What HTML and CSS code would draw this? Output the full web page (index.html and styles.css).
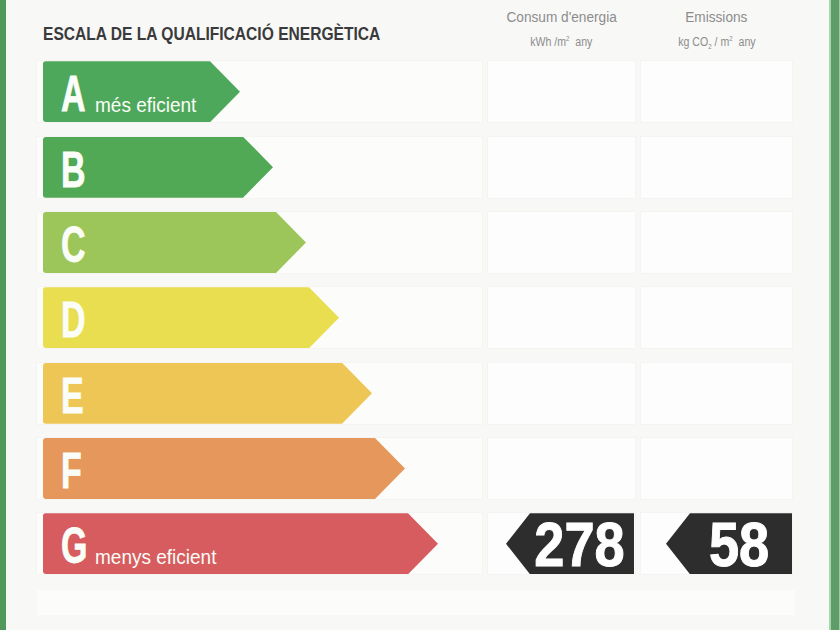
FILE: index.html
```html
<!DOCTYPE html>
<html lang="ca">
<head>
<meta charset="utf-8">
<title>Escala de la qualificació energètica</title>
<link rel="stylesheet" href="styles.css">
</head>
<body>
<div class="frame">
  <div class="edge edge-left"></div>
  <main class="sheet">
    <div class="grid">
      <div class="head head-title"><h1 class="title"><span>ESCALA DE LA QUALIFICACIÓ ENERGÈTICA</span></h1></div>
      <div class="head head-col">
        <div class="col-name"><span>Consum d'energia</span></div>
        <div class="col-unit"><span>kWh /m<sup>2</sup> &nbsp;any</span></div>
      </div>
      <div class="head head-col">
        <div class="col-name"><span>Emissions</span></div>
        <div class="col-unit"><span>kg CO<sub>2</sub> / m<sup>2</sup> &nbsp;any</span></div>
      </div>

      <div class="cell cell-bar"><div class="bar bar-a"><span class="letter">A</span><span class="note">més eficient</span></div></div>
      <div class="cell"></div><div class="cell"></div>

      <div class="cell cell-bar"><div class="bar bar-b"><span class="letter">B</span></div></div>
      <div class="cell"></div><div class="cell"></div>

      <div class="cell cell-bar"><div class="bar bar-c"><span class="letter">C</span></div></div>
      <div class="cell"></div><div class="cell"></div>

      <div class="cell cell-bar"><div class="bar bar-d"><span class="letter">D</span></div></div>
      <div class="cell"></div><div class="cell"></div>

      <div class="cell cell-bar"><div class="bar bar-e"><span class="letter">E</span></div></div>
      <div class="cell"></div><div class="cell"></div>

      <div class="cell cell-bar"><div class="bar bar-f"><span class="letter">F</span></div></div>
      <div class="cell"></div><div class="cell"></div>

      <div class="cell cell-bar"><div class="bar bar-g"><span class="letter">G</span><span class="note">menys eficient</span></div></div>
      <div class="cell cell-value"><div class="tag tag-consum"><span class="num">278</span></div></div>
      <div class="cell cell-value"><div class="tag tag-emis"><span class="num">58</span></div></div>
    </div>
    <div class="foot"></div>
  </main>
  <div class="edge edge-right"></div>
</div>
</body>
</html>
```
FILE: styles.css
```css
* { box-sizing: border-box; }
html, body { margin: 0; padding: 0; }
body {
  width: 840px;
  height: 630px;
  overflow: hidden;
  background: #f3f3f1;
  font-family: "Liberation Sans", Arial, sans-serif;
}
.frame {
  display: flex;
  height: 630px;
}
.edge-left {
  width: 6px;
  background: #4f9a5b;
}
.edge-right {
  width: 11px;
  background: #5e9d68;
  border-left: 2px solid #a7d3ad;
  border-right: 1px solid #9fcaa6;
}
.sheet {
  flex: 1;
  background: #f8f8f7;
  padding-left: 31px;
  display: flex;
  flex-direction: column;
}
.grid {
  display: grid;
  grid-template-columns: 445px 147px 151px;
  grid-template-rows: 47px repeat(7, 61px);
  column-gap: 6px;
  row-gap: 14.33px;
  padding-right: 34px;
}
.head-title {
  display: flex;
  align-items: flex-start;
  padding-left: 6px;
  padding-top: 24px;
}
.title {
  margin: 0;
  font-size: 19px;
  line-height: 19px;
  font-weight: bold;
  color: #3b3b3b;
  white-space: nowrap;
}
.title span {
  display: inline-block;
  transform: scaleX(0.82);
  transform-origin: left center;
}
.head-col {
  display: flex;
  flex-direction: column;
  align-items: center;
  color: #8c8c8c;
  padding-top: 8px;
}
.col-name {
  font-size: 15.5px;
  line-height: 17px;
  white-space: nowrap;
}
.col-name span, .col-unit span {
  display: inline-block;
  transform: scaleX(0.88);
}
.col-unit {
  margin-top: 10px;
  font-size: 12px;
  line-height: 14px;
  white-space: nowrap;
}
.col-unit sup, .col-unit sub {
  font-size: 7px;
  line-height: 0;
}
.cell {
  background: #fdfdfd;
  box-shadow: 0 0 0 1px #f4f4f2;
}
.cell-bar {
  padding-left: 6px;
  background: #fcfcfb;
}
.bar {
  height: 61px;
  border-radius: 3px 0 0 3px;
  clip-path: polygon(0 0, calc(100% - 30px) 0, 100% 50%, calc(100% - 30px) 100%, 0 100%);
  display: flex;
  align-items: flex-end;
  padding-left: 18px;
  color: #fbfdf8;
}
.letter {
  display: inline-block;
  font-size: 50px;
  line-height: 50px;
  font-weight: bold;
  width: 25px;
  margin-bottom: 3px;
  -webkit-text-stroke: 0.8px currentColor;
  transform: scaleX(0.68);
  transform-origin: left bottom;
}
.note {
  display: inline-block;
  font-size: 20px;
  line-height: 20px;
  margin-left: 9px;
  margin-bottom: 7px;
  white-space: nowrap;
  transform: scaleX(0.95);
  transform-origin: left bottom;
}
.bar-a { width: 197px; background: #4ea85b; }
.bar-b { width: 230px; background: #52a955; }
.bar-c { width: 263px; background: #9cc659; }
.bar-d { width: 296px; background: #e8de50; }
.bar-e { width: 329px; background: #eec656; }
.bar-f { width: 362px; background: #e6975b; }
.bar-g { width: 395px; background: #d65c5f; }
.cell-value {
  display: flex;
  justify-content: flex-end;
}
.tag {
  height: 61px;
  background: #2d2d2d;
  clip-path: polygon(24px 0, 100% 0, 100% 100%, 24px 100%, 0 50%);
  display: flex;
  align-items: center;
  justify-content: center;
  padding-left: 20px;
  color: #ffffff;
}
.tag-consum { width: 128px; margin-right: 1px; }
.tag-emis { width: 126px; }
.num {
  display: inline-block;
  font-size: 63px;
  line-height: 62px;
  font-weight: bold;
  -webkit-text-stroke: 1px currentColor;
  transform: scaleX(0.86);
}
.foot {
  margin-top: 16px;
  margin-right: 34px;
  height: 25px;
  background: #fcfcfb;
}
```
